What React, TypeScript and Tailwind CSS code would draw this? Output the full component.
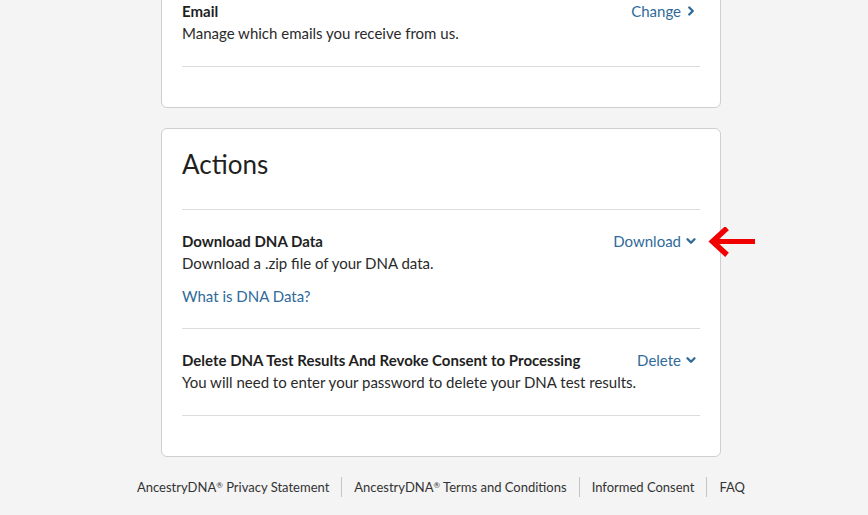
import React from 'react';
import { ChevronRight, ChevronDown } from 'lucide-react';

const font = { fontFamily: 'Lato, "Open Sans", sans-serif' };

const Divider = () => <div className="h-px bg-[#dcdcdc]" />;

const Sep = () => <div className="h-[20px] shrink-0 border-l border-[#c4c4c4]" />;

const Row = ({ title, desc, action, down, children }: { title: string; desc: string; action: string; down?: boolean; children?: React.ReactNode }) => (
  <div className="relative">
    <div className="flex items-start justify-between">
      <div className="text-[15px] font-bold leading-[22px] text-[#1f1f1f]">{title}</div>
      <a className="flex items-center gap-[3px] pr-[2px] text-[15px] leading-[22px] text-[#2f6a9a]">
        {action}
        {down ? <ChevronDown size={14} strokeWidth={4} /> : <ChevronRight size={14} strokeWidth={4} />}
      </a>
    </div>
    <div className="text-[15px] leading-[23px] text-[#2a2a2a]">{desc}</div>
    {children}
  </div>
);

export default function App() {
  return (
    <div className="min-h-[515px] w-full overflow-hidden bg-[#f4f4f4]" style={font}>
      <div className="ml-[161px] w-[560px]">
        <div className="-mt-[20px] rounded-[6px] border border-[#cfcfcf] bg-white px-[20px] pb-[40px] pt-[19px]">
          <Row title="Email" desc="Manage which emails you receive from us." action="Change" />
          <div className="mt-[21px]"><Divider /></div>
        </div>

        <div className="mt-[20px] rounded-[6px] border border-[#cfcfcf] bg-white px-[20px] pb-[40px] pt-[17px]">
          <h2 className="text-[26px] leading-[36px] text-[#1f1f1f]">Actions</h2>
          <div className="mt-[27px]"><Divider /></div>
          <div className="pt-[20px] pb-[21px]">
            <div className="relative">
              <Row title="Download DNA Data" desc="Download a .zip file of your DNA data." action="Download" down>
                <a className="mt-[10px] block text-[15px] leading-[22px] text-[#2f6a9a]">What is DNA Data?</a>
              </Row>
              <svg className="absolute left-[525px] top-[-3px]" width="50" height="30" viewBox="0 0 50 30">
                <path d="M48 14.5 H6" stroke="#f00000" strokeWidth="5" fill="none" />
                <path d="M18 3 L5.5 14.5 L18 26" stroke="#f00000" strokeWidth="5.5" fill="none" strokeLinecap="square" />
              </svg>
            </div>
          </div>
          <Divider />
          <div className="pt-[20px] pb-[21px]">
            <Row
              title="Delete DNA Test Results And Revoke Consent to Processing"
              desc="You will need to enter your password to delete your DNA test results."
              action="Delete"
              down
            />
          </div>
          <Divider />
        </div>

        <div className="mt-[19px] flex items-center justify-center whitespace-nowrap text-[13px] leading-[22px] text-[#333]">
          <a className="pr-[12px]">AncestryDNA<sup className="text-[8px]">®</sup> Privacy Statement</a>
          <Sep />
          <a className="px-[12px]">AncestryDNA<sup className="text-[8px]">®</sup> Terms and Conditions</a>
          <Sep />
          <a className="px-[12px]">Informed Consent</a>
          <Sep />
          <a className="pl-[12px]">FAQ</a>
        </div>
      </div>
    </div>
  );
}
